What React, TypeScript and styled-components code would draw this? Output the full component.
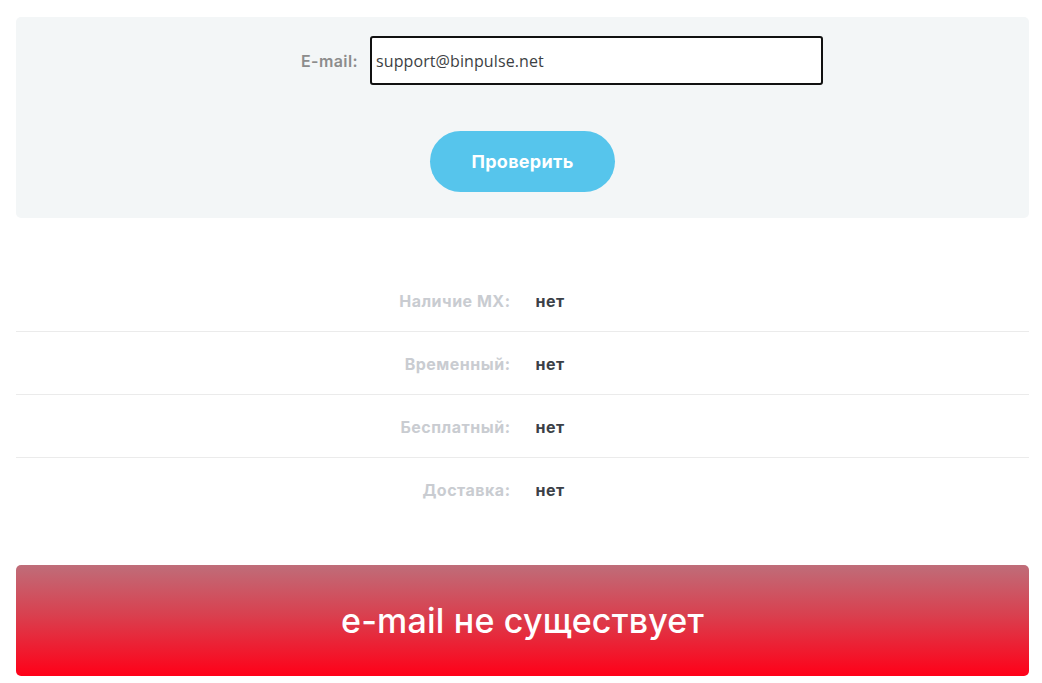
import React from "react";
import styled, { createGlobalStyle } from "styled-components";

const GlobalStyle = createGlobalStyle`
  html, body {
    margin: 0;
    padding: 0;
    background: #ffffff;
    font-family: "Open Sans", "Noto Sans", sans-serif;
  }
`;

const rows = [
  { label: "Наличие MX:", value: "нет" },
  { label: "Временный:", value: "нет" },
  { label: "Бесплатный:", value: "нет" },
  { label: "Доставка:", value: "нет" },
];

export default function App() {
  return (
    <>
      <GlobalStyle />
      <Page>
        <CheckPanel>
          <FormRow>
            <FieldLabel htmlFor="email">E-mail:</FieldLabel>
            <EmailInput id="email" defaultValue="support@binpulse.net" />
          </FormRow>
          <SubmitButton>Проверить</SubmitButton>
        </CheckPanel>

        <ResultTable>
          {rows.map((r) => (
            <ResultRow key={r.label}>
              <ResultLabel>{r.label}</ResultLabel>
              <ResultValue>{r.value}</ResultValue>
            </ResultRow>
          ))}
        </ResultTable>

        <Verdict>e-mail не существует</Verdict>
      </Page>
    </>
  );
}

const Page = styled.div`
  padding: 17px 13px 0 16px;
  display: flex;
  flex-direction: column;
`;

const CheckPanel = styled.div`
  background: #f3f6f7;
  border-radius: 5px;
  padding: 19px 0 26px;
  display: flex;
  flex-direction: column;
  align-items: center;
  gap: 46px;
`;

const FormRow = styled.div`
  width: 100%;
  display: grid;
  grid-template-columns: 354px 453px 1fr;
  align-items: center;
`;

const FieldLabel = styled.label`
  text-align: right;
  padding-right: 12px;
  color: #8c8c8c;
  font-family: Inter, "Open Sans", sans-serif;
  font-weight: 600;
  font-size: 16px;
  letter-spacing: 0.4px;
`;

const EmailInput = styled.input`
  box-sizing: border-box;
  height: 49px;
  width: 453px;
  border: 2px solid #111;
  border-radius: 3px;
  background: #fff;
  padding: 0 4px;
  font-family: "Open Sans", sans-serif;
  font-size: 16px;
  letter-spacing: 0.1px;
  color: #3d3f44;
  outline: none;
`;

const SubmitButton = styled.button`
  width: 185px;
  height: 61px;
  border: none;
  border-radius: 31px;
  background: #56c5ec;
  color: #ffffff;
  font-family: Inter, "Open Sans", sans-serif;
  font-weight: 700;
  font-size: 18px;
  letter-spacing: 0.3px;
  cursor: pointer;
`;

const ResultTable = styled.div`
  margin-top: 51px;
`;

const ResultRow = styled.div`
  display: grid;
  grid-template-columns: 1fr 1fr;
  align-items: center;
  height: 63px;
  padding-top: 1px;
  box-sizing: border-box;
  border-bottom: 1px solid #ebebeb;
  font-family: Inter, "Open Sans", sans-serif;
  font-weight: 700;
  font-size: 16px;
  letter-spacing: 0.5px;

  &:last-child {
    border-bottom: none;
  }
`;

const ResultLabel = styled.div`
  text-align: right;
  padding-right: 12px;
  color: #c9ccd1;
`;

const ResultValue = styled.div`
  padding-left: 13px;
  color: #3b3f47;
`;

const Verdict = styled.div`
  margin-top: 44px;
  height: 111px;
  border-radius: 5px;
  background: linear-gradient(to bottom, #bf6d79 0%, #d9404f 45%, #ff0018 100%);
  color: #ffffff;
  display: flex;
  align-items: center;
  justify-content: center;
  font-family: Inter, "Open Sans", sans-serif;
  font-weight: 500;
  font-size: 34px;
  letter-spacing: 0.2px;
`;
